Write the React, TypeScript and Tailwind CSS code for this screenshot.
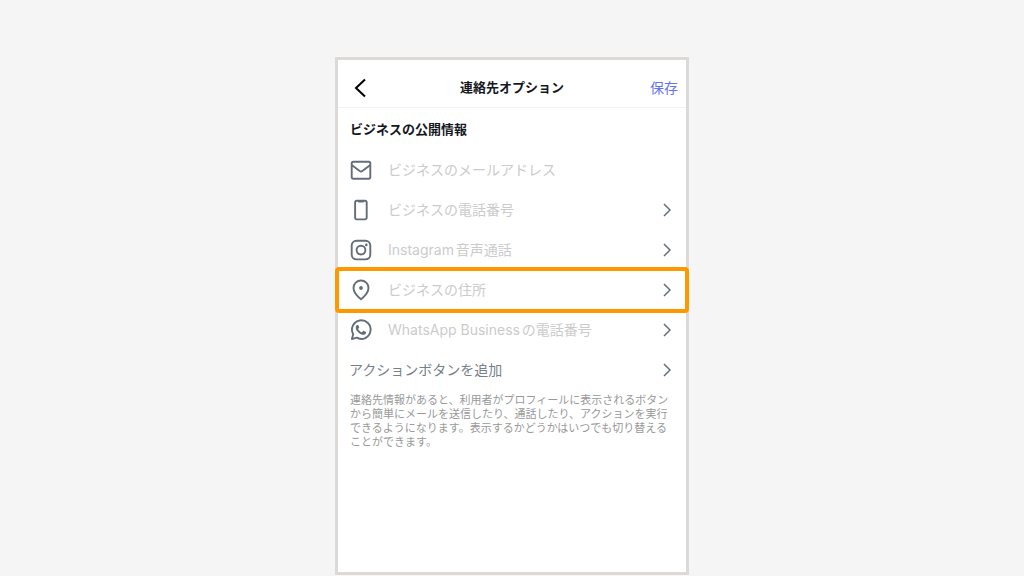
import React from 'react'

const iconProps = {
  viewBox: '0 0 24 24',
  fill: 'none',
  stroke: 'currentColor',
  strokeWidth: 1.9,
  strokeLinecap: 'round' as const,
  strokeLinejoin: 'round' as const,
  className: 'size-6 shrink-0 text-[#646e7b]',
  'aria-hidden': true,
}

function MailIcon() {
  return (
    <svg {...iconProps}>
      <rect x="2.700" y="3.700" width="18.600" height="17" rx="1.600" />
      <path d="M3 7.200l7.700 5.900a2.100 2.100 0 0 0 2.600 0L21 7.200" />
    </svg>
  )
}

function PhoneIcon() {
  return (
    <svg {...iconProps}>
      <rect x="6.100" y="2.800" width="11.600" height="18.600" rx="1.800" />
      <path d="M10 3.500h4" strokeWidth="2.200" />
    </svg>
  )
}

function InstagramIcon() {
  return (
    <svg {...iconProps}>
      <rect x="2.700" y="2.800" width="18.600" height="18.600" rx="4.800" />
      <circle cx="12" cy="12.100" r="4.400" />
      <circle cx="17.300" cy="6.900" r="1.300" fill="currentColor" stroke="none" />
    </svg>
  )
}

function PinIcon() {
  return (
    <svg {...iconProps}>
      <path d="M12 21.200c-1.400-1.100-7.500-6-7.500-11.200a7.500 7.500 0 0 1 15 0c0 5.200-6.100 10.100-7.500 11.200z" />
      <circle cx="12" cy="10" r="1.900" fill="currentColor" stroke="none" />
    </svg>
  )
}

function WhatsAppIcon() {
  return (
    <svg {...iconProps}>
      <path d="M2.900 21.100l1.300-4.900a9.300 9.300 0 1 1 3.500 3.500z" />
      <path
        d="M8.700 6.900c-.3 0-.7.1-1 .4-.4.400-1 1.100-1 2.400 0 1.400 1 2.900 2.200 4.200 1.600 1.700 3.600 2.900 5.400 2.900 1.400 0 2.600-.9 2.800-1.800.1-.5.1-.9-.2-1.100l-2.100-1c-.3-.1-.6-.1-.8.2l-.8 1c-.2.200-.4.200-.7.100-1.300-.6-2.500-1.600-3.200-2.900-.1-.3-.1-.5.100-.7l.7-.9c.1-.2.100-.4 0-.6l-.8-1.900c-.1-.2-.3-.3-.6-.3z"
        fill="currentColor"
        stroke="none"
      />
    </svg>
  )
}

function Chevron() {
  return (
    <svg
      viewBox="0 0 8 14"
      fill="none"
      stroke="currentColor"
      strokeWidth="1.5"
      className="ml-auto h-3.5 w-2 shrink-0 text-[#646e7b]"
      aria-hidden="true"
    >
      <path d="M1 1l6 6-6 6" />
    </svg>
  )
}

const rows = [
  { label: 'ビジネスの電話番号', Icon: PhoneIcon },
  { label: 'Instagram音声通話', Icon: InstagramIcon },
  { label: 'ビジネスの住所', Icon: PinIcon, highlighted: true },
  { label: 'WhatsApp Businessの電話番号', Icon: WhatsAppIcon },
]

export default function App() {
  return (
    <div className="min-h-screen bg-[#f5f5f5] pt-[57px] font-['Inter','Noto_Sans_CJK_JP',sans-serif] [text-autospace:normal]">
      <main className="mx-auto flex min-h-[calc(100vh-58px)] w-full max-w-[354px] flex-col border-3 border-[#dcd9d6] bg-white">
        {/* Header */}
        <header className="grid h-12 grid-cols-[1fr_auto_1fr] items-center border-b border-[#f3f3f3] pt-2 pr-2 pl-4">
          <button type="button" aria-label="戻る" className="w-7">
            <svg
              viewBox="0 0 12 20"
              fill="none"
              stroke="currentColor"
              strokeWidth="2"
              className="h-5 w-3 text-black"
              aria-hidden="true"
            >
              <path d="M11 1.500L2 10l9 8.500" />
            </svg>
          </button>
          <h1 className="mr-2 text-[13px] font-bold text-[#14181d]">連絡先オプション</h1>
          <button type="button" className="justify-self-end text-sm text-[#6573f3]">
            保存
          </button>
        </header>

        {/* Contact fields */}
        <h2 className="px-3 text-[13px] leading-[42px] font-bold text-[#14181d]">ビジネスの公開情報</h2>
        <label className="flex h-10 items-center gap-[15px] px-[11px]">
          <MailIcon />
          <input
            type="email"
            aria-label="ビジネスのメールアドレス"
            placeholder="ビジネスのメールアドレス"
            className="w-full min-w-0 text-sm placeholder:text-[#cbcbcb] focus:outline-none"
          />
        </label>
        {rows.map(({ label, Icon, highlighted }) => (
          <button
            key={label}
            type="button"
            className="relative flex h-10 items-center gap-[15px] pr-[15px] pl-[11px] text-left text-sm text-[#cbcbcb]"
          >
            <Icon />
            {label}
            <Chevron />
            {highlighted && (
              <span className="absolute -inset-[3px] rounded-sm border-4 border-[#ff9800]" />
            )}
          </button>
        ))}
        <button
          type="button"
          className="flex h-10 items-center pr-[15px] pl-[11px] text-left text-sm text-[#777f89]"
        >
          アクションボタンを追加
          <Chevron />
        </button>

        <p className="px-3 pt-[3px] text-[11px] leading-[14px] text-[#999999]">
          連絡先情報があると、利用者がプロフィールに表示されるボタンから簡単にメールを送信したり、通話したり、アクションを実行できるようになります。表示するかどうかはいつでも切り替えることができます。
        </p>
      </main>
    </div>
  )
}
